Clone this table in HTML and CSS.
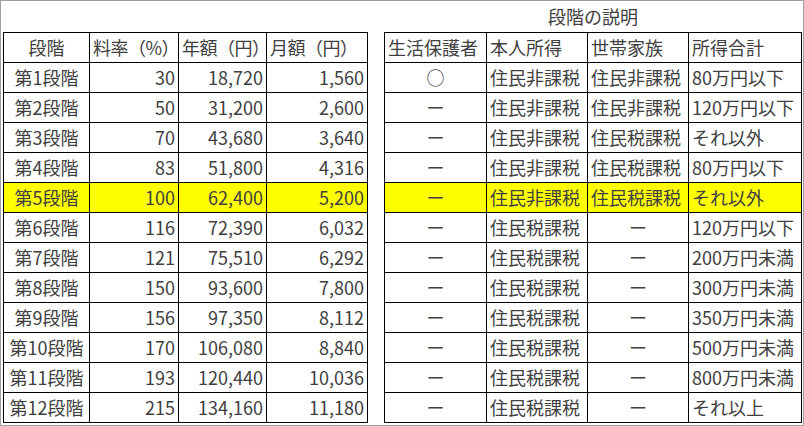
FILE: index.html
```html
<!DOCTYPE html>
<html lang="ja">
<head>
<meta charset="utf-8">
<link rel="stylesheet" href="styles.css">
</head>
<body>
<div class="frame">
  <div class="grid fees">
    <div class="c center">段階</div><div class="c head">料率（%）</div><div class="c head">年額（円）</div><div class="c head">月額（円）</div>
    <div class="c center">第1段階</div><div class="c num">30</div><div class="c num">18,720</div><div class="c num">1,560</div>
    <div class="c center">第2段階</div><div class="c num">50</div><div class="c num">31,200</div><div class="c num">2,600</div>
    <div class="c center">第3段階</div><div class="c num">70</div><div class="c num">43,680</div><div class="c num">3,640</div>
    <div class="c center">第4段階</div><div class="c num">83</div><div class="c num">51,800</div><div class="c num">4,316</div>
    <div class="c center hl">第5段階</div><div class="c num hl">100</div><div class="c num hl">62,400</div><div class="c num hl">5,200</div>
    <div class="c center">第6段階</div><div class="c num">116</div><div class="c num">72,390</div><div class="c num">6,032</div>
    <div class="c center">第7段階</div><div class="c num">121</div><div class="c num">75,510</div><div class="c num">6,292</div>
    <div class="c center">第8段階</div><div class="c num">150</div><div class="c num">93,600</div><div class="c num">7,800</div>
    <div class="c center">第9段階</div><div class="c num">156</div><div class="c num">97,350</div><div class="c num">8,112</div>
    <div class="c center">第10段階</div><div class="c num">170</div><div class="c num">106,080</div><div class="c num">8,840</div>
    <div class="c center">第11段階</div><div class="c num">193</div><div class="c num">120,440</div><div class="c num">10,036</div>
    <div class="c center">第12段階</div><div class="c num">215</div><div class="c num">134,160</div><div class="c num">11,180</div>
  </div>
  <div class="desc">
    <div class="title">段階の説明</div>
    <div class="grid info">
      <div class="c">生活保護者</div><div class="c">本人所得</div><div class="c">世帯家族</div><div class="c">所得合計</div>
      <div class="c center">○</div><div class="c">住民非課税</div><div class="c">住民非課税</div><div class="c">80万円以下</div>
      <div class="c center">ー</div><div class="c">住民非課税</div><div class="c">住民非課税</div><div class="c">120万円以下</div>
      <div class="c center">ー</div><div class="c">住民非課税</div><div class="c">住民税課税</div><div class="c">それ以外</div>
      <div class="c center">ー</div><div class="c">住民非課税</div><div class="c">住民税課税</div><div class="c">80万円以下</div>
      <div class="c center hl">ー</div><div class="c hl">住民非課税</div><div class="c hl">住民税課税</div><div class="c hl">それ以外</div>
      <div class="c center">ー</div><div class="c">住民税課税</div><div class="c center">ー</div><div class="c">120万円以下</div>
      <div class="c center">ー</div><div class="c">住民税課税</div><div class="c center">ー</div><div class="c">200万円未満</div>
      <div class="c center">ー</div><div class="c">住民税課税</div><div class="c center">ー</div><div class="c">300万円未満</div>
      <div class="c center">ー</div><div class="c">住民税課税</div><div class="c center">ー</div><div class="c">350万円未満</div>
      <div class="c center">ー</div><div class="c">住民税課税</div><div class="c center">ー</div><div class="c">500万円未満</div>
      <div class="c center">ー</div><div class="c">住民税課税</div><div class="c center">ー</div><div class="c">800万円未満</div>
      <div class="c center">ー</div><div class="c">住民税課税</div><div class="c center">ー</div><div class="c">それ以上</div>
    </div>
  </div>
</div>
</body>
</html>
```

FILE: styles.css
```css
html, body {
  margin: 0;
  padding: 0;
  background: #fff;
}
.frame {
  width: 804px;
  height: 426px;
  box-sizing: border-box;
  border: 1px solid #a0a0a0;
  padding: 0 0 0 2px;
  display: flex;
  gap: 16px;
  font-family: "Noto Sans CJK JP", "Noto Sans", sans-serif;
  font-size: 18px;
  color: #404040;
  background: #fff;
}
.grid {
  display: grid;
  grid-auto-rows: 30px;
  border-left: 1px solid #000;
  border-top: 1px solid #000;
  align-self: flex-start;
}
.fees {
  margin-top: 31px;
  grid-template-columns: 86px 89px 88px 101px;
}
.info {
  grid-template-columns: 102px 101px 101px 113px;
}
.desc {
  display: flex;
  flex-direction: column;
}
.title {
  height: 31px;
  line-height: 31px;
  text-align: center;
}
.c {
  border-right: 1px solid #000;
  border-bottom: 1px solid #000;
  line-height: 29px;
  padding: 0 3px;
  white-space: nowrap;
}
.head {
  padding: 0 0 0 3px;
  letter-spacing: -0.5px;
}
.center {
  text-align: center;
  padding: 0;
}
.num {
  text-align: right;
  padding: 0 3px 0 0;
}
.hl {
  background: #ffff00;
}
```
